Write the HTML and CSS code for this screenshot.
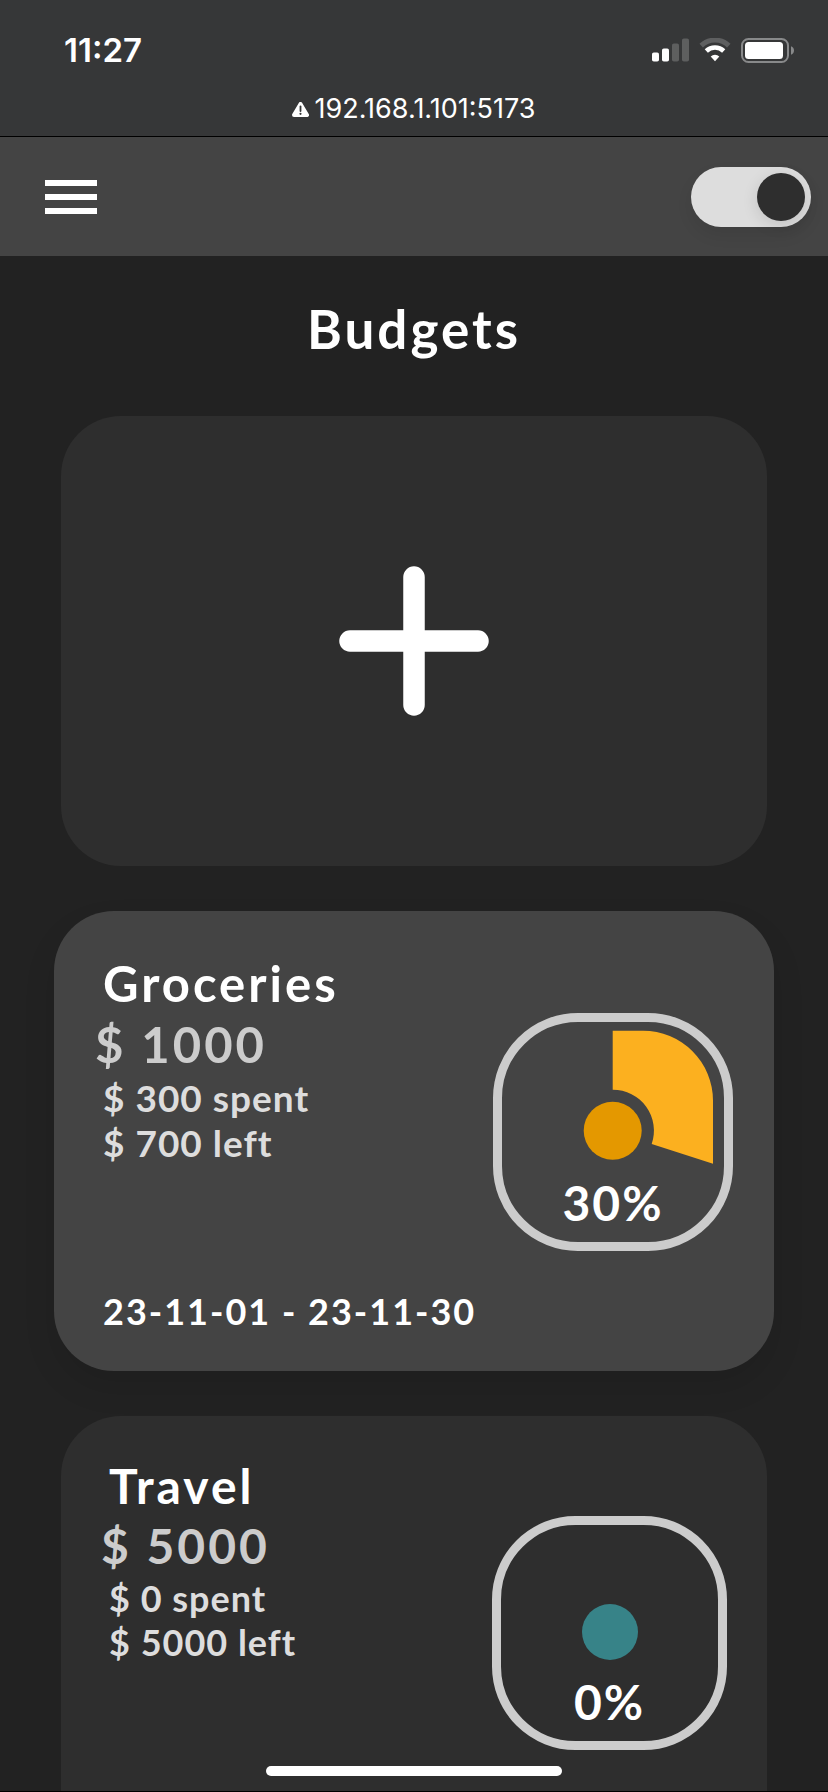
FILE: index.html
```html
<!DOCTYPE html>
<html lang="en">
<head>
  <meta charset="utf-8">
  <meta name="viewport" content="width=device-width, initial-scale=1">
  <title>Budgets</title>
  <link rel="stylesheet" href="styles.css">
</head>
<body>
  <div class="status">
    <div class="status-row">
      <span class="clock">11:27</span>
      <div class="status-icons">
        <svg width="37" height="24" viewBox="0 0 37 24" fill="#fff" aria-hidden="true">
          <rect x="0" y="14.500" width="7" height="9" rx="1.800"/>
          <rect x="10" y="10.500" width="7" height="13" rx="1.800"/>
          <rect x="20" y="5.500" width="7" height="18" rx="1.800" opacity=".2"/>
          <rect x="30" y="0.500" width="7" height="23" rx="1.800" opacity=".2"/>
        </svg>
        <svg width="32" height="24" viewBox="0 0 32 24" fill="none" aria-hidden="true">
          <path d="M2.200 7.600A20 20 0 0 1 29.800 7.600" stroke="#5e5f60" stroke-width="5"/>
          <path d="M7.300 13A12.500 12.500 0 0 1 24.700 13" stroke="#fff" stroke-width="4.600"/>
          <path d="M11.700 18.400A6.300 6.300 0 0 1 20.300 18.400L16 23.200Z" fill="#fff"/>
        </svg>
        <svg width="53" height="25" viewBox="0 0 53 25" aria-hidden="true">
          <rect x="1" y="1" width="46" height="23" rx="6.500" fill="none" stroke="#88898a" stroke-width="2"/>
          <rect x="4" y="4" width="38" height="17" rx="3.500" fill="#fff"/>
          <path d="M50 8.200C52.200 9 53 10.700 53 12.500S52.200 16 50 16.800Z" fill="#88898a"/>
        </svg>
      </div>
    </div>
    <div class="address">
      <svg width="17" height="15" viewBox="0 0 17 15" aria-hidden="true">
        <path d="M8.500 2L15 13H2Z" fill="#fff" stroke="#fff" stroke-width="4" stroke-linejoin="round"/>
        <path d="M8.500 4.500V9" stroke="#363738" stroke-width="1.800" stroke-linecap="round"/>
        <circle cx="8.500" cy="11.800" r="1.100" fill="#363738"/>
      </svg>
      <span>192.168.1.101:5173</span>
    </div>
  </div>

  <header class="topbar">
    <button class="menu" type="button" aria-label="Menu"><i></i><i></i><i></i></button>
    <input class="toggle" type="checkbox" role="switch" aria-label="Dark mode" checked>
  </header>

  <main class="page">
    <h1 class="page-title">Budgets</h1>
    <div class="cards">
      <button class="card card-add" type="button" aria-label="Add budget">
        <svg width="150" height="150" viewBox="0 0 150 150" stroke="#fff" stroke-width="21.500" stroke-linecap="round" aria-hidden="true">
          <path d="M75 11V139M11 75H139"/>
        </svg>
      </button>

      <article class="card card-active">
        <div class="info">
          <h2 class="name">Groceries</h2>
          <p class="amount">$ 1000</p>
          <p class="detail">$ 300 spent</p>
          <p class="detail">$ 700 left</p>
        </div>
        <div class="gauge">
          <svg class="gauge-art" viewBox="0 0 240 238" aria-hidden="true">
            <rect x="4.500" y="4.500" width="231" height="229" rx="80.500" fill="none" stroke="#ccc" stroke-width="9"/>
            <path d="M119.700 17.700H150A70 70 0 0 1 220 87.700V150.700L158.700 131A41 41 0 0 0 119.700 76.700Z" fill="#fcb01f"/>
            <circle cx="119.700" cy="117.700" r="29" fill="#e49800"/>
          </svg>
          <span class="percent">30%</span>
        </div>
        <p class="dates">23-11-01 - 23-11-30</p>
      </article>

      <article class="card">
        <div class="info">
          <h2 class="name">Travel</h2>
          <p class="amount">$ 5000</p>
          <p class="detail">$ 0 spent</p>
          <p class="detail">$ 5000 left</p>
        </div>
        <div class="gauge">
          <svg class="gauge-art" viewBox="0 0 235 234" aria-hidden="true">
            <rect x="4.500" y="4.500" width="226" height="225" rx="79" fill="none" stroke="#ccc" stroke-width="9"/>
            <circle cx="118" cy="116" r="28" fill="#378388"/>
          </svg>
          <span class="percent">0%</span>
        </div>
      </article>
    </div>
  </main>
  <div class="home-indicator"></div>
</body>
</html>
```
FILE: styles.css
```css
* {
  box-sizing: border-box;
}

body {
  margin: 0;
  height: 100vh;
  display: flex;
  flex-direction: column;
  overflow: hidden;
  background: #222;
  border-bottom: 1px solid #000;
  color: #fff;
  font-family: Lato, "Noto Sans", sans-serif;
  font-weight: 700;
}

h1, h2, p {
  margin: 0;
  font: inherit;
}

svg {
  display: block;
}

.status {
  flex: none;
  padding: 30px 34px 9px 64px;
  background: #363738;
  border-bottom: 1px solid #000;
  font-family: Inter, "Liberation Sans", sans-serif;
}

.status-row {
  display: flex;
  align-items: center;
  justify-content: space-between;
  height: 40px;
}

.clock {
  font-size: 33px;
  font-weight: 600;
  line-height: 40px;
}

.status-icons {
  display: flex;
  align-items: center;
  gap: 10px;
}

.address {
  display: flex;
  align-items: center;
  justify-content: center;
  gap: 5px;
  margin: 21px 0 0 -30px;
  font-size: 27px;
  font-weight: 400;
  line-height: 36px;
}

.topbar {
  flex: none;
  display: flex;
  align-items: center;
  justify-content: space-between;
  height: 119px;
  padding: 0 17px 0 45px;
  background: #444;
}

.menu {
  display: grid;
  gap: 8px;
  width: 52px;
  padding: 0;
  border: 0;
  background: none;
}

.menu i {
  height: 6px;
  background: #fff;
}

.toggle {
  appearance: none;
  display: flex;
  justify-content: flex-end;
  width: 120px;
  height: 60px;
  margin: 0;
  padding: 6px;
  border-radius: 30px;
  background: #ddd;
  box-shadow: 0 8px 16px rgb(0 0 0 / 8%);
}

.toggle::before {
  content: "";
  width: 48px;
  height: 48px;
  border-radius: 50%;
  background: #2e2e2e;
  box-shadow: 0 4px 16px rgb(0 0 0 / 12%);
}

.page {
  flex: 1;
  min-height: 0;
  overflow: hidden;
  padding: 0 61px;
  letter-spacing: 2px;
}

.page-title {
  padding: 41px 0 55px;
  font-size: 53px;
  line-height: 64px;
  letter-spacing: 3px;
  text-align: center;
}

.cards {
  display: grid;
  gap: 50px;
}

.card {
  display: grid;
  grid-template-columns: 1fr 235px;
  grid-template-rows: 1fr auto;
  min-height: 450px;
  padding: 40px;
  border: 0;
  border-radius: 60px;
  background: #2e2e2e;
  color: inherit;
}

.card-add {
  display: flex;
  align-items: center;
  justify-content: center;
}

.card-active {
  grid-template-columns: 1fr 240px;
  min-height: 460px;
  margin: -5px -7px;
  padding: 42px 41px 38px;
  background: #444;
  box-shadow: 0 16px 32px rgb(0 0 0 / 10%);
}

.name,
.amount {
  font-size: 48px;
  line-height: 60px;
  letter-spacing: 3px;
}

.name,
.detail,
.dates {
  padding-left: 8px;
}

.amount {
  color: #ccc;
}

.detail {
  color: #ddd;
  letter-spacing: 1px;
}

.detail,
.dates {
  font-size: 36px;
  line-height: 44px;
}

.card-active .name,
.card-active .amount {
  font-size: 49px;
  line-height: 61px;
}

.card-active .detail {
  font-size: 37px;
  line-height: 45px;
}

.dates {
  grid-column: 1 / -1;
}

.gauge {
  position: relative;
  align-self: start;
  margin-top: 60px;
}

.gauge-art {
  width: 100%;
}

.percent {
  position: absolute;
  right: 0;
  bottom: 18px;
  left: 0;
  font-size: 48px;
  line-height: 60px;
  text-align: center;
}

.home-indicator {
  position: fixed;
  bottom: 16px;
  left: 50%;
  width: 296px;
  height: 10px;
  margin-left: -148px;
  border-radius: 5px;
  background: #fff;
}
```
